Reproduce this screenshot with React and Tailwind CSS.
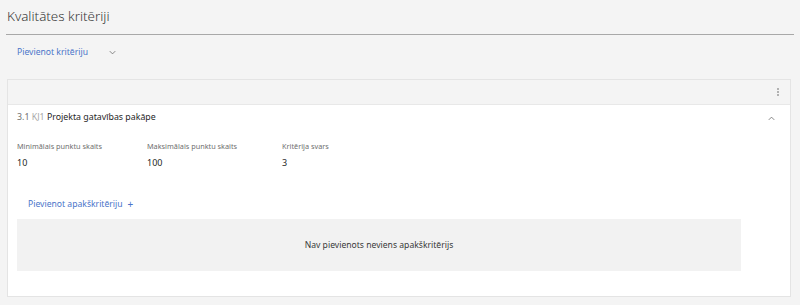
import React from "react";

function ChevronDown({ className }) {
  return (
    <svg viewBox="0 0 16 16" className={className} fill="none" stroke="currentColor" strokeWidth="1.2">
      <path d="M4 6l4 4 4-4" />
    </svg>
  );
}

function ChevronUp({ className }) {
  return (
    <svg viewBox="0 0 16 16" className={className} fill="none" stroke="currentColor" strokeWidth="1.2">
      <path d="M4 10l4-4 4 4" />
    </svg>
  );
}

function OverflowMenu({ className }) {
  return (
    <svg viewBox="0 0 16 16" className={className} fill="currentColor">
      <circle cx="8" cy="4" r="1" />
      <circle cx="8" cy="8" r="1" />
      <circle cx="8" cy="12" r="1" />
    </svg>
  );
}

const fields = [
  { label: "Minimālais punktu skaits", value: "10", width: "w-[130px]" },
  { label: "Maksimālais punktu skaits", value: "100", width: "w-[135px]" },
  { label: "Kritērija svars", value: "3", width: "w-[120px]" },
];

export default function App() {
  return (
    <div
      className="min-h-[305px] w-full bg-[#f4f4f4] px-[6px] text-[#161616]"
      style={{ fontFamily: '"Noto Sans", "Open Sans", sans-serif' }}
    >
      <div className="flex h-[35px] items-center border-b border-[#a8a8a8] pl-[1px] pb-[1px]">
        <h1 className="text-[13.4px] font-light text-[#393939]">Kvalitātes kritēriji</h1>
      </div>

      <div className="flex h-[33px] items-center pl-[11px] pt-[1px]">
        <span className="text-[8.6px] text-[#4a74c9]">Pievienot kritēriju</span>
        <ChevronDown className="ml-[19px] h-[11px] w-[11px] text-[#6f6f6f]" />
      </div>

      <div className="mt-[11px] ml-[1px] mr-[3px] border border-[#e4e4e4] bg-white">
        <div className="flex h-[25px] items-center justify-end border-b border-[#e8e8e8] bg-[#f4f4f4] pr-[6px]">
          <OverflowMenu className="h-[12px] w-[12px] text-[#525252]" />
        </div>

        <div className="px-[9px] pb-[25px]">
          <div className="flex h-[25px] items-center justify-between pt-[1px]">
            <p className="text-[8.8px] text-[#262626]">
              <span className="text-[#6f6f6f]">3.1</span>{" "}
              <span className="text-[#a8a8a8]">KJ1</span> Projekta gatavības pakāpe
            </p>
            <ChevronUp className="mr-[4px] h-[11px] w-[11px] text-[#6f6f6f]" />
          </div>

          <div className="mt-[11px] flex">
            {fields.map((f) => (
              <div key={f.label} className={f.width}>
                <div className="text-[7.3px] text-[#6f6f6f]">{f.label}</div>
                <div className="mt-[4px] text-[9px] text-[#262626]">{f.value}</div>
              </div>
            ))}
          </div>

          <div className="mt-[21px] flex h-[28px] items-center pl-[11px]">
            <span className="text-[8.6px] text-[#4a74c9]">Pievienot apakškritēriju</span>
            <span className="ml-[5px] text-[10px] text-[#4a74c9]">+</span>
          </div>

          <div className="mt-[1px] flex h-[52px] w-[724px] items-center justify-center bg-[#f2f2f2]">
            <span className="text-[8.6px] text-[#393939]">Nav pievienots neviens apakškritērijs</span>
          </div>
        </div>
      </div>
    </div>
  );
}
